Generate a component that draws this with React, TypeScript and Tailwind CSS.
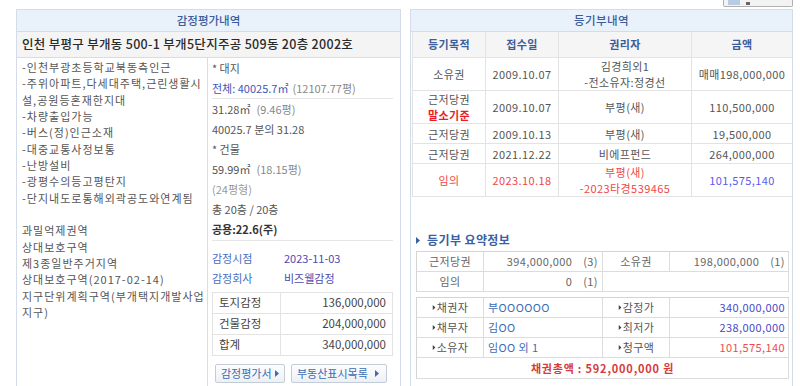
import React from "react";

function Tri({ className }: { className?: string }) {
    return (
        <svg width="4" height="7" viewBox="0 0 4 7" className={className}>
            <path d="M0 0 L4 3.5 L0 7 Z" fill="currentColor" />
        </svg>
    );
}

const leftLines = [
    "-인천부광초등학교북동측인근",
    "-주위아파트,다세대주택,근린생활시",
    "설,공원등혼재한지대",
    "-차량출입가능",
    "-버스(정)인근소재",
    "-대중교통사정보통",
    "-난방설비",
    "-광평수의등고평탄지",
    "-단지내도로통해외곽공도와연계됨",
    "\u00a0",
    "과밀억제권역",
    "상대보호구역",
    "제3종일반주거지역",
    "상대보호구역(2017-02-14)",
    "지구단위계획구역(부개택지개발사업",
    "지구)",
];

const regRows = [
    { kind: ["소유권"], date: "2009.10.07", who: ["김경희외1", "-전소유자:정경선"], amt: "매매198,000,000", h: "h-[33px]" },
    { kind: ["근저당권", "말소기준"], date: "2009.10.07", who: ["부평(새)"], amt: "110,500,000", h: "h-[33px]" },
    { kind: ["근저당권"], date: "2009.10.13", who: ["부평(새)"], amt: "19,500,000", h: "h-[20px]" },
    { kind: ["근저당권"], date: "2021.12.22", who: ["비에프펀드"], amt: "264,000,000", h: "h-[20px]" },
];

function LeftPanel() {
    return (
        <div className="w-[385px] h-[377px] border border-b-0 border-[#d3dce8] flex flex-col">
            {/* header */}
            <div className="h-[22px] bg-[#e9f1fb] border-b border-[#d3dce8] flex items-center justify-center text-[11.5px] font-medium text-[#3d5c9a]">
                감정평가내역
            </div>
            <div className="h-[26px] bg-[#f4f4f4] border-b border-[#dcdcdc] flex items-center pl-[5px] text-[12.5px] font-medium text-[#2a2a2a] tracking-[0.3px]">
                인천 부평구 부개동 500-1 부개5단지주공 509동 20층 2002호
            </div>
            <div className="flex flex-1">
                <div className="w-[190px] pl-[5px] pt-[1px] text-[11px] leading-[16.33px] text-[#555] whitespace-nowrap tracking-[1px]">
                    {leftLines.map((l, i) => (
                        <div key={i}>{l}</div>
                    ))}
                </div>
                <div className="flex-1 border-l border-[#dcdcdc] pl-[4px] pr-[7px] text-[11px] text-[#555] whitespace-nowrap">
                    <div className="h-[20px] flex items-center">* 대지</div>
                    <div className="h-[21px] flex items-center border-b border-[#e6e6e6]">
                        <span className="text-[#3d55b5]">전체: 40025.7㎡</span>
                        <span className="ml-[4px] text-[#888]">(12107.77평)</span>
                    </div>
                    <div className="h-[20px] flex items-center">
                        31.28㎡<span className="ml-[6px] text-[#888]">(9.46평)</span>
                    </div>
                    <div className="h-[20px] flex items-center">40025.7 분의 31.28</div>
                    <div className="h-[20px] flex items-center">* 건물</div>
                    <div className="h-[20px] flex items-center">
                        59.99㎡<span className="ml-[6px] text-[#888]">(18.15평)</span>
                    </div>
                    <div className="h-[20px] flex items-center text-[#999]">(24평형)</div>
                    <div className="h-[20px] flex items-center">총 20층 / 20층</div>
                    <div className="h-[22px] flex items-center border-b border-[#e6e6e6] font-semibold text-[#333]">공용:22.6(주)</div>
                    <div className="pt-[7px]">
                        <div className="h-[20px] flex items-center">
                            <span className="w-[72px] text-[#4a6cc0]">감정시점</span>
                            <span className="text-[#4b4bb0]">2023-11-03</span>
                        </div>
                        <div className="h-[20px] flex items-center">
                            <span className="w-[72px] text-[#4a6cc0]">감정회사</span>
                            <span className="text-[#4b4bb0]">비즈웰감정</span>
                        </div>
                    </div>
                    <div className="mt-[4px] border border-[#e3e3e3] text-[#444]">
                        {[
                            ["토지감정", "136,000,000"],
                            ["건물감정", "204,000,000"],
                            ["합계", "340,000,000"],
                        ].map(([k, v], i) => (
                            <div key={k} className={i < 2 ? "h-[21px] flex border-b border-[#e3e3e3]" : "h-[20px] flex"}>
                                <div className="w-[68px] pl-[6px] flex items-center border-r border-[#e3e3e3] text-[11.5px]">{k}</div>
                                <div className="flex-1 flex items-center justify-end pr-[6px] text-[11.5px]">{v}</div>
                            </div>
                        ))}
                    </div>
                    <div className="mt-[8px] flex gap-[6px] pl-[3px]">
                        <div className="h-[19px] w-[70px] border border-[#c3ccd8] rounded-[2px] bg-gradient-to-b from-[#fdfdfd] to-[#edf0f4] flex items-center justify-between px-[5px] text-[#3e6bb3]">
                            <span>감정평가서</span>
                            <Tri className="text-[#3e6bb3]" />
                        </div>
                        <div className="h-[19px] w-[96px] border border-[#c3ccd8] rounded-[2px] bg-gradient-to-b from-[#fdfdfd] to-[#edf0f4] flex items-center justify-between pl-[5px] pr-[7px] text-[#3e6bb3]">
                            <span>부동산표시목록</span>
                            <Tri className="text-[#3e6bb3]" />
                        </div>
                    </div>
                </div>
            </div>
        </div>
    );
}

function RightPanel() {
    const cell = "flex flex-col items-center justify-center border-r border-b border-[#e3e3e3] leading-[16px]";
    const cellLast = "flex flex-col items-center justify-center border-b border-[#e3e3e3] leading-[16px]";
    const sc = "h-[20px] flex items-center border-r border-b border-[#dcdcdc]";
    return (
        <div className="w-[383px] h-[377px] border border-b-0 border-[#d3dce8] flex flex-col text-[11px] whitespace-nowrap tracking-[0.4px]">
            <div className="h-[22px] bg-[#e9f1fb] border-b border-[#d3dce8] flex items-center justify-center text-[11.5px] font-medium text-[#3d5c9a]">
                등기부내역
            </div>
            {/* register table */}
            <div className="ml-[1px] border-l border-[#e3e3e3] grid grid-cols-[73px_73px_133px_1fr] text-[#555]">
                {["등기목적", "접수일", "권리자", "금액"].map((h, i) => (
                    <div
                        key={h}
                        className={
                            i < 3
                                ? "h-[26px] bg-[#f5f5f5] flex items-center justify-center border-r border-b border-[#e3e3e3] font-semibold text-[#3d5c9a]"
                                : "h-[26px] bg-[#f5f5f5] flex items-center justify-center border-b border-[#e3e3e3] font-semibold text-[#3d5c9a]"
                        }
                    >
                        {h}
                    </div>
                ))}
                {regRows.map((r, i) => (
                    <React.Fragment key={i}>
                        <div className={`${cell} ${r.h}`}>
                            <span>{r.kind[0]}</span>
                            {r.kind[1] && <span className="font-bold text-[#ec1c24]">{r.kind[1]}</span>}
                        </div>
                        <div className={`${cell} ${r.h}`}>{r.date}</div>
                        <div className={`${cell} ${r.h}`}>
                            {r.who.map((w) => (
                                <span key={w}>{w}</span>
                            ))}
                        </div>
                        <div className={`${cellLast} ${r.h}`}>{r.amt}</div>
                    </React.Fragment>
                ))}
                <div className={`${cell} h-[33px] text-[#f04848]`}>임의</div>
                <div className={`${cell} h-[33px] text-[#f04848]`}>2023.10.18</div>
                <div className={`${cell} h-[33px] text-[#f04848]`}>
                    <span>부평(새)</span>
                    <span>-2023타경539465</span>
                </div>
                <div className={`${cellLast} h-[33px] text-[#5a5aee]`}>101,575,140</div>
            </div>

            {/* summary */}
            <div className="mt-[37px] pl-[5px] pr-[3px]">
                <div className="h-[12px] flex items-center gap-[7px] text-[12px] font-bold text-[#3a5fa5]">
                    <Tri className="text-[#3a5fa5]" />
                    <span>등기부 요약정보</span>
                </div>
                <div className="mt-[5px] border-l border-t border-[#d4d4d4] grid grid-cols-[67px_119px_67px_1fr] text-[#666]">
                    <div className={`${sc} justify-center`}>근저당권</div>
                    <div className={`${sc} justify-end pr-[4px]`}>
                        394,000,000<span className="ml-[11px]">(3)</span>
                    </div>
                    <div className={`${sc} justify-center`}>소유권</div>
                    <div className={`${sc} justify-end pr-[3px]`}>
                        198,000,000<span className="ml-[11px]">(1)</span>
                    </div>
                    <div className={`${sc} justify-center`}>임의</div>
                    <div className={`${sc} justify-end pr-[4px]`}>
                        0<span className="ml-[11px]">(1)</span>
                    </div>
                    <div className={`${sc} col-span-2`} />
                </div>
                <div className="mt-[5px] border-l border-t border-[#d4d4d4] grid grid-cols-[67px_119px_67px_1fr] text-[#555]">
                    {[
                        ["채권자", "부OOOOOO", "감정가", "340,000,000", "text-[#4a4ac8]"],
                        ["채무자", "김OO", "최저가", "238,000,000", "text-[#4a4ac8]"],
                        ["소유자", "임OO 외 1", "청구액", "101,575,140", "text-[#ee4c4c]"],
                    ].map(([a, b, c, d, col]) => (
                        <React.Fragment key={a}>
                            <div className={`${sc} justify-center gap-[1px]`}>
                                <Tri className="text-[#444] scale-75" />
                                {a}
                            </div>
                            <div className={`${sc} pl-[4px] text-[#3c6cb4]`}>{b}</div>
                            <div className={`${sc} justify-center gap-[1px]`}>
                                <Tri className="text-[#444] scale-75" />
                                {c}
                            </div>
                            <div className={`${sc} justify-end pr-[3px] ${col}`}>{d}</div>
                        </React.Fragment>
                    ))}
                    <div className="col-span-4 h-[21px] flex items-center justify-center border-r border-b border-[#dcdcdc] font-bold text-[#d63c3c] tracking-[0.8px]">
                        채권총액 : 592,000,000 원
                    </div>
                </div>
            </div>
        </div>
    );
}

export default function App() {
    return (
        <div className="w-[800px] h-[386px] overflow-hidden bg-white font-['Noto_Sans_CJK_KR',sans-serif]">
            <div className="h-[9px] flex justify-end pr-[7px]">
                <div className="w-[70px] h-[7px] border border-t-0 border-[#b0b0b0] rounded-b-[2px] bg-[#f3f3f3] flex items-end pl-[4px] pb-[1px] gap-[6px]">
                    <div className="w-[12px] h-[5px] bg-[#b8cbe6]" />
                    <div className="w-[4px] h-[3px] bg-[#666]" />
                </div>
            </div>
            <div className="flex gap-[9px] pl-[16px]">
                <LeftPanel />
                <RightPanel />
            </div>
        </div>
    );
}
